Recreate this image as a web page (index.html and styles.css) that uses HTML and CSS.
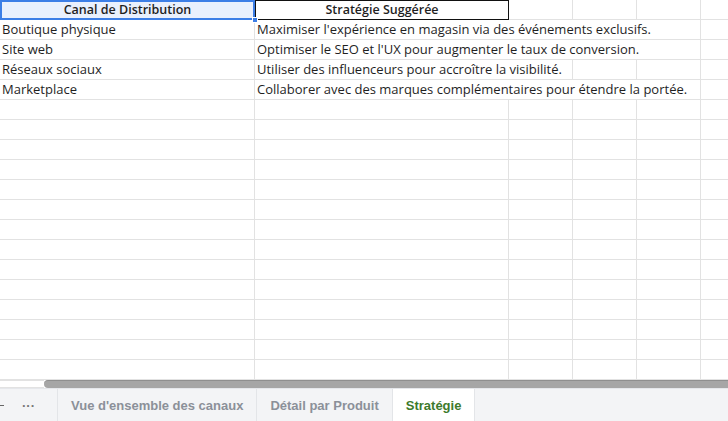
FILE: index.html
```html
<!DOCTYPE html>
<html lang="fr">
<head>
<meta charset="utf-8">
<link rel="stylesheet" href="styles.css">
</head>
<body>
<div class="app">
  <div class="grid">
    <div class="row">
      <div class="cell a head selected">Canal de Distribution<span class="handle"></span></div>
      <div class="cell b head boxed">Stratégie Suggérée</div>
      <div class="cell c"></div><div class="cell c"></div><div class="cell c"></div><div class="cell c"></div>
    </div>
    <div class="row">
      <div class="cell a">Boutique physique</div>
      <div class="cell b"><span class="overflow">Maximiser l'expérience en magasin via des événements exclusifs.</span></div>
      <div class="cell c"></div><div class="cell c"></div><div class="cell c"></div><div class="cell c"></div>
    </div>
    <div class="row">
      <div class="cell a">Site web</div>
      <div class="cell b"><span class="overflow">Optimiser le SEO et l'UX pour augmenter le taux de conversion.</span></div>
      <div class="cell c"></div><div class="cell c"></div><div class="cell c"></div><div class="cell c"></div>
    </div>
    <div class="row">
      <div class="cell a">Réseaux sociaux</div>
      <div class="cell b"><span class="overflow">Utiliser des influenceurs pour accroître la visibilité.</span></div>
      <div class="cell c"></div><div class="cell c"></div><div class="cell c"></div><div class="cell c"></div>
    </div>
    <div class="row">
      <div class="cell a">Marketplace</div>
      <div class="cell b"><span class="overflow">Collaborer avec des marques complémentaires pour étendre la portée.</span></div>
      <div class="cell c"></div><div class="cell c"></div><div class="cell c"></div><div class="cell c"></div>
    </div>
    <div class="row"><div class="cell a"></div><div class="cell b"></div><div class="cell c"></div><div class="cell c"></div><div class="cell c"></div><div class="cell c"></div></div>
    <div class="row"><div class="cell a"></div><div class="cell b"></div><div class="cell c"></div><div class="cell c"></div><div class="cell c"></div><div class="cell c"></div></div>
    <div class="row"><div class="cell a"></div><div class="cell b"></div><div class="cell c"></div><div class="cell c"></div><div class="cell c"></div><div class="cell c"></div></div>
    <div class="row"><div class="cell a"></div><div class="cell b"></div><div class="cell c"></div><div class="cell c"></div><div class="cell c"></div><div class="cell c"></div></div>
    <div class="row"><div class="cell a"></div><div class="cell b"></div><div class="cell c"></div><div class="cell c"></div><div class="cell c"></div><div class="cell c"></div></div>
    <div class="row"><div class="cell a"></div><div class="cell b"></div><div class="cell c"></div><div class="cell c"></div><div class="cell c"></div><div class="cell c"></div></div>
    <div class="row"><div class="cell a"></div><div class="cell b"></div><div class="cell c"></div><div class="cell c"></div><div class="cell c"></div><div class="cell c"></div></div>
    <div class="row"><div class="cell a"></div><div class="cell b"></div><div class="cell c"></div><div class="cell c"></div><div class="cell c"></div><div class="cell c"></div></div>
    <div class="row"><div class="cell a"></div><div class="cell b"></div><div class="cell c"></div><div class="cell c"></div><div class="cell c"></div><div class="cell c"></div></div>
    <div class="row"><div class="cell a"></div><div class="cell b"></div><div class="cell c"></div><div class="cell c"></div><div class="cell c"></div><div class="cell c"></div></div>
    <div class="row"><div class="cell a"></div><div class="cell b"></div><div class="cell c"></div><div class="cell c"></div><div class="cell c"></div><div class="cell c"></div></div>
    <div class="row"><div class="cell a"></div><div class="cell b"></div><div class="cell c"></div><div class="cell c"></div><div class="cell c"></div><div class="cell c"></div></div>
    <div class="row"><div class="cell a"></div><div class="cell b"></div><div class="cell c"></div><div class="cell c"></div><div class="cell c"></div><div class="cell c"></div></div>
    <div class="row"><div class="cell a"></div><div class="cell b"></div><div class="cell c"></div><div class="cell c"></div><div class="cell c"></div><div class="cell c"></div></div>
  </div>
  <div class="hscroll">
    <div class="hs-left"></div>
    <div class="hs-thumb"></div>
  </div>
  <div class="tabs">
    <div class="tb-dash"></div>
    <div class="tb-more">···</div>
    <div class="tab">Vue d'ensemble des canaux</div>
    <div class="tab">Détail par Produit</div>
    <div class="tab active">Stratégie</div>
  </div>
</div>
</body>
</html>
```

FILE: styles.css
```css
html, body {
  margin: 0;
  padding: 0;
  background: #ffffff;
}
.app {
  width: 728px;
  height: 421px;
  overflow: hidden;
  display: flex;
  flex-direction: column;
}
.grid {
  height: 380px;
  overflow: hidden;
  flex: none;
}
.row {
  display: flex;
  height: 20px;
  width: 800px;
}
.cell {
  flex: none;
  box-sizing: border-box;
  height: 20px;
  border-right: 1px solid #e2e2e2;
  border-bottom: 1px solid #e2e2e2;
  font-family: "Open Sans", "Noto Sans", sans-serif;
  font-size: 13px;
  line-height: 19px;
  color: #1f1f1f;
  white-space: nowrap;
  padding-left: 2px;
  position: relative;
}
.cell.a { width: 255px; }
.cell.b { width: 254px; overflow: visible; padding-left: 2px; }
.cell.c { width: 64px; }
.overflow {
  position: relative;
  z-index: 1;
  display: inline-block;
  height: 19px;
  background: #ffffff;
  padding-right: 2px;
}
.cell.head {
  font-weight: 600;
  font-size: 12.5px;
  text-align: center;
  padding-left: 0;
}
.cell.selected {
  background: #e9f0fd;
  border: 2px solid #3c7ee6;
  line-height: 16px;
}
.handle {
  position: absolute;
  right: -5px;
  bottom: -5px;
  width: 6px;
  height: 6px;
  background: #3c7ee6;
  border: 1px solid #ffffff;
  box-sizing: border-box;
  z-index: 2;
}
.cell.boxed {
  border: 1px solid #111111;
  line-height: 18px;
}
.hscroll {
  flex: none;
  height: 8px;
  display: flex;
  background: #ffffff;
}
.hs-left {
  width: 44px;
  flex: none;
  border-top: 1px solid #e2e2e2;
  border-bottom: 1px solid #e2e2e2;
  box-sizing: border-box;
}
.hs-thumb {
  flex: 1;
  background: #a6a6a6;
  border-top: 1px solid #8f8f8f;
  border-radius: 4px 0 0 4px;
  box-sizing: border-box;
}
.tabs {
  flex: none;
  height: 33px;
  display: flex;
  align-items: stretch;
  background: #f3f4f6;
  border-top: 1px solid #e5e7eb;
  box-sizing: border-box;
  font-family: "Liberation Sans", Arial, sans-serif;
  font-weight: 700;
  font-size: 13px;
  color: #8b9099;
}
.tb-dash {
  width: 4px;
  height: 1px;
  background: #666;
  align-self: center;
  margin-right: 18px;
}
.tb-more {
  width: 35px;
  display: flex;
  align-items: center;
  padding-left: 0;
  color: #777;
  border-right: 1px solid #e3e5e8;
}
.tab {
  display: flex;
  align-items: center;
  padding: 0 13px;
  border-right: 1px solid #e3e5e8;
}
.tab.active {
  background: #ffffff;
  color: #3d7a2c;
}
```
